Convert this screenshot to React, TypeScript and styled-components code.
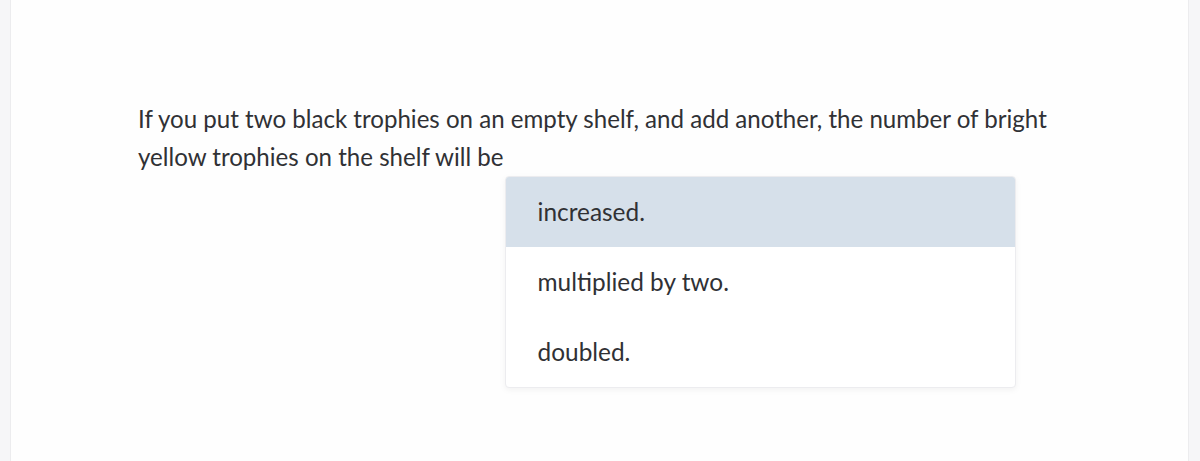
import styled, { createGlobalStyle } from "styled-components";

const GlobalStyle = createGlobalStyle`
  html, body {
    margin: 0;
    padding: 0;
    background: #f6f6f8;
  }
  body {
    font-family: Lato, "Liberation Sans", sans-serif;
  }
`;

const Page = styled.div`
  height: 461px;
  padding: 0 11px 0 10px;
  overflow: hidden;
`;

const Card = styled.div`
  height: 100%;
  background: #fefefe;
  border-left: 1px solid #ececee;
  border-right: 1px solid #ececee;
  padding: 100px 0 0 127px;
  box-sizing: border-box;
`;

const Question = styled.p`
  margin: 0;
  width: 940px;
  font-size: 24.1px;
  line-height: 38px;
  color: #303135;
`;

const Blank = styled.span`
  position: relative;
  display: inline-block;
  width: 3px;
  height: 38px;
  vertical-align: top;
`;

const Menu = styled.ul`
  position: absolute;
  top: 38px;
  left: 1px;
  width: 509px;
  margin: 0;
  padding: 0;
  list-style: none;
  background: #fff;
  border: 1px solid #ececef;
  border-radius: 4px;
  box-shadow: 0 2px 6px rgba(0, 0, 0, 0.05);
  overflow: hidden;
`;

const Option = styled.li<{ $active?: boolean }>`
  height: 70px;
  display: flex;
  align-items: center;
  padding-left: 32px;
  font-size: 24.4px;
  color: #303135;
  background: ${(props) => (props.$active ? "#d6e0ea" : "transparent")};
`;

const options = ["increased.", "multiplied by two.", "doubled."];

function App() {
  return (
    <>
      <GlobalStyle />
      <Page>
        <Card>
          <Question>
            If you put two black trophies on an empty shelf, and add another, the
            number of bright yellow trophies on the shelf will be
            <Blank>
              <Menu>
                {options.map((text, i) => (
                  <Option key={text} $active={i === 0}>
                    {text}
                  </Option>
                ))}
              </Menu>
            </Blank>
          </Question>
        </Card>
      </Page>
    </>
  );
}

export default App;
